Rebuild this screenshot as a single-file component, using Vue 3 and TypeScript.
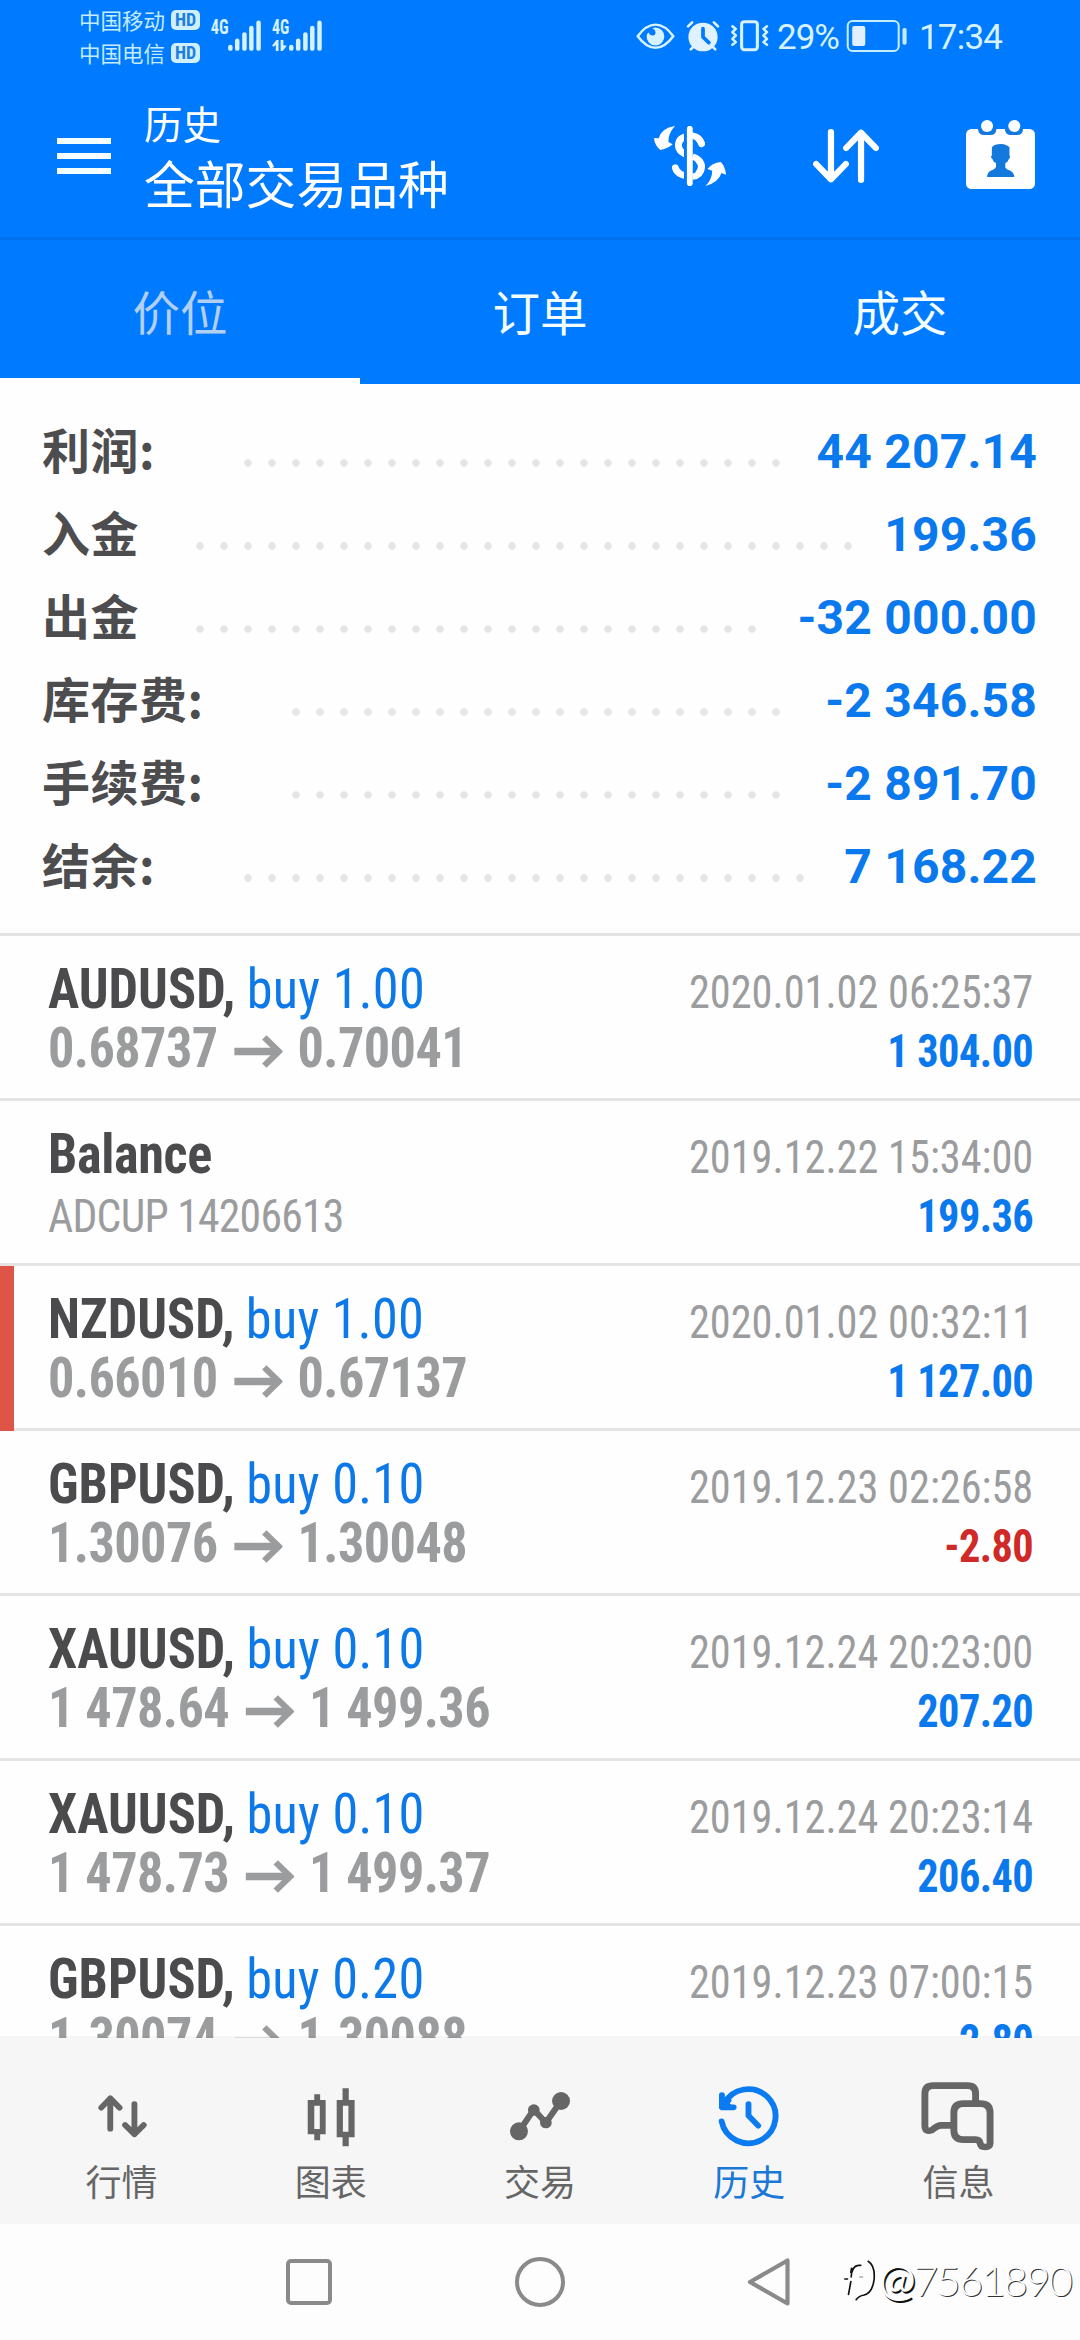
<script setup lang="ts">
interface SummaryRow {
  label: string
  value: string
  leaderStart: number
  dots: number
}

interface Deal {
  symbol: string
  action?: string
  from?: string
  to?: string
  comment?: string
  time: string
  profit: string
  loss?: boolean
  flagged?: boolean
}

const summary: SummaryRow[] = [
  { label: '利润:', value: '44 207.14', leaderStart: 236, dots: 23 },
  { label: '入金', value: '199.36', leaderStart: 188, dots: 28 },
  { label: '出金', value: '-32 000.00', leaderStart: 188, dots: 24 },
  { label: '库存费:', value: '-2 346.58', leaderStart: 284, dots: 21 },
  { label: '手续费:', value: '-2 891.70', leaderStart: 284, dots: 21 },
  { label: '结余:', value: '7 168.22', leaderStart: 236, dots: 24 },
]

const deals: Deal[] = [
  { symbol: 'AUDUSD', action: 'buy 1.00', from: '0.68737', to: '0.70041', time: '2020.01.02 06:25:37', profit: '1 304.00' },
  { symbol: 'Balance', comment: 'ADCUP 14206613', time: '2019.12.22 15:34:00', profit: '199.36' },
  { symbol: 'NZDUSD', action: 'buy 1.00', from: '0.66010', to: '0.67137', time: '2020.01.02 00:32:11', profit: '1 127.00', flagged: true },
  { symbol: 'GBPUSD', action: 'buy 0.10', from: '1.30076', to: '1.30048', time: '2019.12.23 02:26:58', profit: '-2.80', loss: true },
  { symbol: 'XAUUSD', action: 'buy 0.10', from: '1 478.64', to: '1 499.36', time: '2019.12.24 20:23:00', profit: '207.20' },
  { symbol: 'XAUUSD', action: 'buy 0.10', from: '1 478.73', to: '1 499.37', time: '2019.12.24 20:23:14', profit: '206.40' },
  { symbol: 'GBPUSD', action: 'buy 0.20', from: '1.30074', to: '1.30088', time: '2019.12.23 07:00:15', profit: '2.80' },
]
</script>

<template>
  <div class="screen">
    <div class="status">
      <div class="carriers">
        <div class="carrier"><span>中国移动</span><b class="hd">HD</b></div>
        <div class="carrier"><span>中国电信</span><b class="hd">HD</b></div>
      </div>
      <svg class="signal" viewBox="606 55 334 105" preserveAspectRatio="none">
        <g class="net">
          <text x="611" y="103" textLength="52" lengthAdjust="spacingAndGlyphs">4G</text>
          <text x="789" y="103" textLength="50" lengthAdjust="spacingAndGlyphs">4G</text>
        </g>
        <g stroke="#d6f2ff" stroke-width="13" stroke-linecap="round">
          <path d="M668 142V147M688 123V147M709 104V147M729 85V147M750 69V147" />
          <path d="M845 142V147M865 123V147M886 104V147M906 85V147M927 69V147" />
        </g>
        <path d="M789 138L802 121H808V154H800V136L793 141ZM814 121H822V137L832 138L820 154H814Z" fill="#d6f2ff" />
      </svg>
      <svg class="st-eye" viewBox="280 65 114 85" preserveAspectRatio="none" fill="none" stroke="#d6f2ff">
        <path d="M285 108Q310 73 337 73T389 108Q364 143 337 143T285 108Z" stroke-width="7.500" stroke-linejoin="round" />
        <path d="M337 82A26 27 0 1 1 311 106Q313 99 317 97Q320 106 329 106Q338 104 337 95Q336 88 328 85Q332 82 337 82Z" fill="#d6f2ff" stroke="none" />
      </svg>
      <svg class="st-alarm" viewBox="424 60 100 96" preserveAspectRatio="none">
        <g stroke="#e0f2ff" stroke-width="8" stroke-linecap="round" fill="none">
          <path d="M430 79L442 67M518 79L506 67M438 148L446 140M510 148L502 140" />
        </g>
        <circle cx="474" cy="111" r="43" fill="#e0f2ff" />
        <path d="M474 86V111L491 128" fill="none" stroke="#007aff" stroke-width="11" stroke-linecap="round" stroke-linejoin="round" />
      </svg>
      <svg class="st-vibe" viewBox="550 58 114 100" preserveAspectRatio="none" fill="none" stroke="#d6f2ff">
        <rect x="584" y="66" width="46" height="85" rx="8" stroke-width="9" />
        <path d="M557 80L567 88L557 98L567 108L557 118L567 128L557 136M658 80L648 88L658 98L648 108L658 118L648 128L658 136" stroke-width="7.500" stroke-linecap="round" stroke-linejoin="round" />
      </svg>
      <span class="pct">29%</span>
      <svg class="st-batt" viewBox="888 58 180 102" preserveAspectRatio="none">
        <rect x="893" y="64" width="148" height="90" rx="14" fill="none" stroke="#c4ecff" stroke-width="6" />
        <rect x="906" y="79" width="38" height="60" rx="6" fill="#e0f0ff" />
        <rect x="1052" y="85" width="12" height="50" rx="5" fill="#c4ecff" />
      </svg>
      <span class="clock">17:34</span>
    </div>

    <header class="header">
      <div class="burger"><i></i><i></i><i></i></div>
      <div class="titles">
        <div class="title">历史</div>
        <div class="subtitle">全部交易品种</div>
      </div>
      <svg class="ic-dollar" viewBox="331 378 209 180" preserveAspectRatio="none">
        <g fill="none" stroke="#fff" stroke-width="20">
          <path d="M469 430Q462 408 436 408Q402 410 402 436Q402 458 436 468Q469 478 469 501Q467 527 436 530Q398 526 393 503" stroke-linecap="round" />
        </g>
        <path d="M435 370V566" stroke="#007aff" stroke-width="34" />
        <path d="M443 469Q470 480 468 501Q466 528 443 530" fill="none" stroke="#fff" stroke-width="19" />
        <path d="M443 407Q462 410 469 432" fill="none" stroke="#fff" stroke-width="19" stroke-linecap="round" />
        <path d="M435 386V550" stroke="#fff" stroke-width="17" stroke-linecap="round" />
        <path d="M392 378Q352 384 345 415L331 414Q333 437 350 450Q372 446 385 433L373 426Q372 400 392 378ZM480 558Q500 538 500 512L486 507Q499 489 525 486Q538 500 540 524L527 519Q518 548 480 558Z" fill="#fff" />
      </svg>
      <svg class="ic-sort" viewBox="793 387 191 162" preserveAspectRatio="none" fill="none" stroke="#fff" stroke-width="18" stroke-linecap="round" stroke-linejoin="round">
        <path d="M845 396V538M802 492L845 538L888 492M932 540V398M889 444L932 398L975 444" />
      </svg>
      <svg class="ic-cal" viewBox="1237 360 200 207" preserveAspectRatio="none">
        <rect x="1237" y="387" width="200" height="180" rx="16" fill="#fff" />
        <path d="M1272 386V390Q1274 405 1290 405H1308Q1323 405 1325 390V386ZM1350 386V390Q1352 405 1367 405H1385Q1401 405 1402 390V386Z" fill="#1479dc" />
        <ellipse cx="1298" cy="378" rx="17.500" ry="18" fill="#fff" />
        <ellipse cx="1377" cy="378" rx="17.500" ry="18" fill="#fff" />
        <path d="M1312 442Q1320 432 1338 432Q1355 433 1363 442V466L1365 472Q1362 476 1361 478Q1358 488 1351 489V503Q1355 509 1366 512Q1377 519 1377 531H1298Q1298 519 1308 512Q1321 508 1324 501V489Q1316 487 1314 478L1309 472L1312 466Z" fill="#1479dc" />
      </svg>
    </header>

    <nav class="tabs">
      <div class="tab active">价位</div>
      <div class="tab">订单</div>
      <div class="tab">成交</div>
    </nav>

    <section class="summary">
      <div v-for="row in summary" :key="row.label" class="sum-row">
        <span class="sum-label" :style="{ width: row.leaderStart - 42 + 'px' }">{{ row.label }}</span>
        <span class="leader" :style="{ width: row.dots * 24 + 'px' }"></span>
        <span class="sum-value">{{ row.value }}</span>
      </div>
    </section>

    <main class="deals">
      <div v-for="(d, i) in deals" :key="i" class="deal" :class="{ flagged: d.flagged }">
        <div class="left">
          <div class="name"><b :class="{ plain: !d.action }">{{ d.symbol }}<template v-if="d.action">,</template></b><span v-if="d.action" class="action">{{ d.action }}</span></div>
          <div v-if="d.from" class="prices">
            <span>{{ d.from }}</span>
            <svg class="arrow" viewBox="679 308 140 98" preserveAspectRatio="none" fill="none" stroke="#9b9c9e">
              <path d="M679 357H808" stroke-width="22" />
              <path d="M766 315L808 357L766 399" stroke-width="18" />
            </svg>
            <span>{{ d.to }}</span>
          </div>
          <div v-else class="comment">{{ d.comment }}</div>
        </div>
        <div class="right">
          <div class="time">{{ d.time }}</div>
          <div class="profit" :class="{ loss: d.loss }">{{ d.profit }}</div>
        </div>
      </div>
    </main>

    <nav class="bottom">
      <div class="item">
        <svg viewBox="237 410 232 240" preserveAspectRatio="none" fill="none" stroke="#666" stroke-width="17" stroke-linecap="round" stroke-linejoin="round">
          <path d="M319 565V474M293 502L319 474L346 502M389 491V582M362 554L389 582L416 554" />
        </svg>
        <span>行情</span>
      </div>
      <div class="item">
        <svg viewBox="844.5 410 232 240" preserveAspectRatio="none">
          <path d="M912 462H929V479H945V582H929V600H912V582H893V479H912ZM912 496V566H928V496ZM994 444H1012V479H1029V591H1012V618H994V591H977V479H994ZM995 496V574H1011V496Z" fill="#666" fill-rule="evenodd" />
        </svg>
        <span>图表</span>
      </div>
      <div class="item">
        <svg viewBox="-116 410 232 240" preserveAspectRatio="none" fill="#666">
          <path d="M-61 573L-18 508L17 547L61 482" fill="none" stroke="#666" stroke-width="18" />
          <ellipse cx="-61" cy="573" rx="26" ry="27" />
          <circle cx="-18" cy="509" r="17" />
          <circle cx="17" cy="547" r="17" />
          <ellipse cx="61" cy="482" rx="26" ry="27" />
        </svg>
        <span>交易</span>
      </div>
      <div class="item on">
        <svg viewBox="491.5 410 232 240" preserveAspectRatio="none" fill="none" stroke="#0a7bf0" stroke-width="17" stroke-linecap="round" stroke-linejoin="round">
          <path d="M528 543A79 81 0 1 0 535 491" />
          <path d="M529 464V501H563Z" fill="#0a7bf0" stroke="none" />
          <path d="M529 464V501H563M529 501L548 480" />
          <path d="M606 491V526L634 556" />
        </svg>
        <span>历史</span>
      </div>
      <div class="item">
        <svg viewBox="1099 410 232 240" preserveAspectRatio="none" fill="none" stroke="#666" stroke-width="20" stroke-linejoin="round">
          <path d="M1266 484V460Q1266 436 1243 436H1143Q1119 436 1119 460V556Q1119 577 1140 569Q1154 555 1167 555H1200" />
          <path d="M1231 490H1280Q1308 490 1308 517V608Q1308 620 1294 620Q1280 620 1279 608Q1277 598 1266 598H1231Q1203 598 1203 570V517Q1203 490 1231 490Z" />
        </svg>
        <span>信息</span>
      </div>
    </nav>

    <footer class="sysnav">
      <i class="recent"></i>
      <i class="home"></i>
      <svg class="back" viewBox="0 0 43 50" fill="none" stroke="#8a8a8a" stroke-width="4.200" stroke-linejoin="round">
        <path d="M40.500 3.500V46.500L3 25Z" />
      </svg>
      <div class="mark">
        <svg viewBox="40 70 95 126" fill="none" stroke="#111" stroke-width="5" stroke-linecap="round">
          <path d="M90 89H82Q63 91 61 124M42 130H50M60 138L53 176M62 98L60 110" />
          <path d="M112 77Q133 90 130 130Q125 172 100 178Q84 181 76 192" />
          <path d="M86 124H96" stroke="#888" stroke-width="3" />
        </svg>
        <span><b>@</b>7561890</span>
      </div>
    </footer>
  </div>
</template>

<style>
body {
  margin: 0;
}
</style>

<style scoped>
.screen {
  width: 1080px;
  height: 2340px;
  display: flex;
  flex-direction: column;
  overflow: hidden;
  background: #fefefe;
  font-family: Roboto, "Noto Sans CJK SC", sans-serif;
}
svg {
  display: block;
  flex: none;
}
.status {
  height: 72px;
  box-sizing: border-box;
  display: flex;
  align-items: flex-start;
  padding-left: 79px;
  background: #007aff;
  color: #d6f2ff;
}
.carriers {
  padding-top: 3px;
  width: 130px;
}
.carrier {
  display: flex;
  align-items: center;
  height: 33px;
  line-height: 33px;
  font-family: "Noto Sans CJK SC", sans-serif;
  font-size: 21.5px;
  color: #c4ecff;
}
.carrier span {
  width: 92px;
}
.hd {
  width: 29px;
  height: 20px;
  border-radius: 5px;
  background: #cfefff;
  color: #1c7fe0;
  font: bold 18px/20px "Roboto Condensed", Roboto, sans-serif;
  text-align: center;
}
.signal {
  width: 115px;
  height: 35px;
  margin-top: 18px;
  overflow: visible;
}
.net text {
  font: bold 58px "Roboto Condensed", Roboto, sans-serif;
  fill: #d6f2ff;
}
.st-eye {
  width: 39px;
  height: 28px;
  margin: 22px 0 0 312px;
}
.st-alarm {
  width: 34px;
  height: 32px;
  margin: 20px 0 0 11px;
}
.st-vibe {
  width: 39px;
  height: 33px;
  margin: 19px 0 0 10px;
}
.pct {
  width: 69px;
  margin-left: 8px;
  font-size: 35px;
  line-height: 76px;
  letter-spacing: -1px;
}
.st-batt {
  width: 62px;
  height: 34px;
  margin-top: 19px;
}
.clock {
  margin-left: 11px;
  font-size: 35px;
  line-height: 76px;
  letter-spacing: -0.8px;
}
.header {
  height: 168px;
  box-sizing: border-box;
  border-bottom: 3px solid #0071ee;
  display: flex;
  align-items: center;
  padding: 0 45px 0 57px;
  background: #007aff;
  color: #fff;
}
.burger {
  width: 54px;
  display: flex;
  flex-direction: column;
  gap: 9px;
  margin-top: 3px;
}
.burger i {
  height: 6px;
  background: #f4feff;
}
.titles {
  flex: 1;
  margin-left: 33px;
  font-family: "Noto Sans CJK SC", sans-serif;
}
.title {
  font-size: 38.5px;
  line-height: 54px;
}
.subtitle {
  font-size: 50.8px;
  line-height: 66px;
}
.ic-dollar {
  width: 72px;
  height: 60px;
  margin-top: 3px;
}
.ic-sort {
  width: 66px;
  height: 54px;
  margin: 3px 87px 0;
}
.ic-cal {
  width: 69px;
  height: 69px;
}
.tabs {
  height: 144px;
  display: flex;
  background: #007aff;
}
.tab {
  flex: 1;
  box-sizing: border-box;
  text-align: center;
  font: 47.5px/141px "Noto Sans CJK SC", sans-serif;
  color: #f4feff;
}
.tab.active {
  color: #b2cff2;
  border-bottom: 6px solid #fefefe;
}
.summary {
  height: 552px;
  box-sizing: border-box;
  padding: 23px 43px 0 42px;
  border-bottom: 3px solid #e4e4e4;
}
.sum-row {
  height: 83px;
  display: flex;
  align-items: center;
}
.sum-label {
  flex: none;
  font: bold 48px/83px "Noto Sans CJK SC", sans-serif;
  letter-spacing: 0.5px;
  color: #4d4d4f;
}
.leader {
  flex: none;
  height: 8px;
  margin-top: 29px;
  background: radial-gradient(circle at 12px 4px, #e5e5e5 3.4px, transparent 4.1px) 0 0 / 24px 8px repeat-x;
}
.sum-value {
  margin-left: auto;
  padding-top: 5px;
  font-size: 48px;
  font-weight: bold;
  letter-spacing: 0.2px;
  color: #0b79ee;
  white-space: nowrap;
}
.deals {
  height: 1102px;
  overflow: hidden;
  position: relative;
  font-family: "Roboto Condensed", Roboto, sans-serif;
}
.deals::after {
  content: "";
  position: absolute;
  left: 0;
  right: 0;
  bottom: 0;
  height: 2px;
  background: rgba(0, 0, 0, 0.035);
}
.deal {
  position: relative;
  height: 165px;
  box-sizing: border-box;
  display: flex;
  justify-content: space-between;
  padding: 24px 47px 0 48px;
  border-bottom: 3px solid #e4e4e4;
}
.flagged::before {
  content: "";
  position: absolute;
  left: 0;
  top: 0;
  width: 14px;
  height: 165px;
  background: #de5548;
}
.left {
  transform: scaleX(0.95);
  transform-origin: left;
}
.name,
.prices {
  display: flex;
  align-items: center;
  height: 59px;
  font-size: 55px;
  line-height: 59px;
  white-space: nowrap;
}
.name {
  color: #4b4b4d;
}
.plain {
  letter-spacing: -0.4px;
}
.action {
  margin-left: 12px;
  letter-spacing: 0.3px;
  color: #0d79e8;
}
.prices {
  font-weight: bold;
  letter-spacing: -0.6px;
  color: #9b9c9e;
}
.arrow {
  width: 51px;
  height: 33px;
  margin: 6px 16px 0 17px;
}
.comment {
  font-size: 46px;
  line-height: 65px;
  letter-spacing: -0.8px;
  color: #9b9c9e;
}
.right {
  padding-top: 3px;
  text-align: right;
  font-size: 46px;
  line-height: 59px;
  transform: scaleX(0.92);
  transform-origin: right;
}
.time {
  color: #9b9c9e;
}
.profit {
  font-weight: bold;
  letter-spacing: -0.6px;
  color: #0b79ee;
}
.profit.loss {
  color: #cf2a27;
}
.bottom {
  height: 186px;
  box-sizing: border-box;
  display: flex;
  padding: 0 17px;
  background: #f6f6f6;
}
.item {
  flex: 1;
  display: flex;
  flex-direction: column;
  align-items: center;
  padding-top: 39px;
  color: #666;
  font: 36px/54px "Noto Sans CJK SC", sans-serif;
}
.item svg {
  width: 80px;
  height: 80px;
}
.item span {
  margin-top: -4px;
}
.item.on {
  color: #1a78d6;
}
.sysnav {
  position: relative;
  height: 116px;
  display: flex;
  align-items: flex-start;
  background: #fdfdfd;
}
.recent {
  box-sizing: border-box;
  width: 46px;
  height: 46px;
  margin: 35px 0 0 286px;
  border: 4px solid #8a8a8a;
  border-radius: 5px;
}
.home {
  box-sizing: border-box;
  width: 50px;
  height: 50px;
  margin: 33px 0 0 183px;
  border: 4px solid #8a8a8a;
  border-radius: 50%;
}
.back {
  width: 43px;
  height: 50px;
  margin: 33px 0 0 182px;
}
.mark {
  position: absolute;
  right: 9px;
  top: 32px;
  display: flex;
  align-items: center;
}
.mark svg {
  width: 32px;
  height: 42px;
}
.mark span {
  margin-left: 3px;
  font: 300 42px/46px Lato, Roboto, sans-serif;
  letter-spacing: -1.9px;
  color: #fdfdfd;
  text-shadow: 1px 1px 0 #333;
}
.mark b {
  font-weight: 400;
  font-size: 44px;
  text-shadow: 1.5px 1.5px 0 #111;
}
</style>
